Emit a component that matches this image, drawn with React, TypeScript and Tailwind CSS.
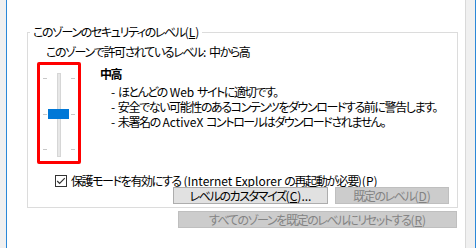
import React from 'react';

const jp = { fontFamily: '"Noto Sans CJK JP", "Noto Sans", sans-serif', fontFeatureSettings: '"palt"' };

function Slider() {
    // trackbar drawing: track, ticks and the blue thumb
    return (
        <svg width="38" height="96" viewBox="0 0 38 96">
            <rect x="17.5" y="8.5" width="3" height="83" fill="#e7e7e7" stroke="#d6d6d6" />
            {[13, 49, 84].map((y) => (
                <g key={y} fill="#c8c8c8">
                    <rect x="3" y={y} width="4" height="1" />
                    <rect x="31" y={y} width="4" height="1" />
                </g>
            ))}
            <rect x="8" y="44" width="21" height="10" fill="#0078d7" />
        </svg>
    );
}

function CheckBox() {
    return (
        <svg width="12" height="12" viewBox="0 0 12 12" className="shrink-0">
            <rect x="0.5" y="0.5" width="11" height="11" fill="#fff" stroke="#333" />
            <path d="M2.2 6 L4.6 8.4 L9.8 3.2" fill="none" stroke="#333" strokeWidth="1.2" />
        </svg>
    );
}

function Lat({ children }: { children: React.ReactNode }) {
    return <span className="tracking-normal">{children}</span>;
}

export default function App() {
    return (
        <div className="w-[476px] h-[248px] flex bg-white text-[12px] tracking-[-1.4px] text-black overflow-hidden whitespace-nowrap" style={jp}>
            <div className="w-[6px] bg-[#f0f0f0]"></div>
            <div className="w-px bg-[#2b88d8]"></div>

            <div className="flex-1 flex flex-col">
                <fieldset className="ml-[20px] mt-[24px] w-[431px] border border-[#dcdcdc] pb-[3px]">
                    <legend className="ml-[2px] px-[3px] leading-[16px]">
                        このゾーンのセキュリティのレベル<Lat>(<span className="underline">L</span>)</Lat>
                    </legend>

                    <div className="ml-[18px] mt-[4px] leading-[16px]">このゾーンで許可されているレベル<Lat>: </Lat>中から高</div>

                    <div className="flex mt-[2px] ml-[9px]">
                        <div className="w-[44px] h-[102px] border-[3px] border-[#ff0000] rounded-[2px]">
                            <Slider />
                        </div>
                        <div className="ml-[19px] pt-[4px]">
                            <div className="font-bold leading-[15px]">中高</div>
                            <ul className="mt-[3px] ml-[11px] leading-[15px]">
                                <li><Lat>- </Lat>ほとんどの<Lat> Web </Lat>サイトに適切です。</li>
                                <li><Lat>- </Lat>安全でない可能性のあるコンテンツをダウンロードする前に警告します。</li>
                                <li><Lat>- </Lat>未署名の<Lat> ActiveX </Lat>コントロールはダウンロードされません。</li>
                            </ul>
                        </div>
                    </div>

                    <div className="flex items-center gap-[4px] ml-[27px] mt-[10px] leading-[13px] h-[13px]">
                        <CheckBox />
                        <span>保護モードを有効にする<Lat> (Internet Explorer </Lat>の再起動が必要<Lat>)(<span className="underline">P</span>)</Lat></span>
                    </div>

                    <div className="flex mt-0 ml-[145px]">
                        <button className="w-[155px] h-[17px] border border-[#adadad] bg-[#e1e1e1] leading-[15px]">
                            レベルのカスタマイズ<Lat>(<span className="underline">C</span>)...</Lat>
                        </button>
                        <button className="ml-[7px] w-[114px] h-[17px] border border-[#bfbfbf] bg-[#cccccc] text-[#838383] leading-[15px]">
                            既定のレベル<Lat>(<span className="underline">D</span>)</Lat>
                        </button>
                    </div>
                </fieldset>

                <button className="ml-[171px] mt-[3px] w-[279px] h-[17px] border border-[#bfbfbf] bg-[#cccccc] text-[#838383] leading-[15px]">
                    すべてのゾーンを既定のレベルにリセットする<Lat>(<span className="underline">R</span>)</Lat>
                </button>
            </div>

            <div className="w-px bg-[#d9d9d9]"></div>
            <div className="w-[9px] bg-[#f0f0f0]"></div>
            <div className="w-px bg-[#2b88d8]"></div>
        </div>
    );
}
